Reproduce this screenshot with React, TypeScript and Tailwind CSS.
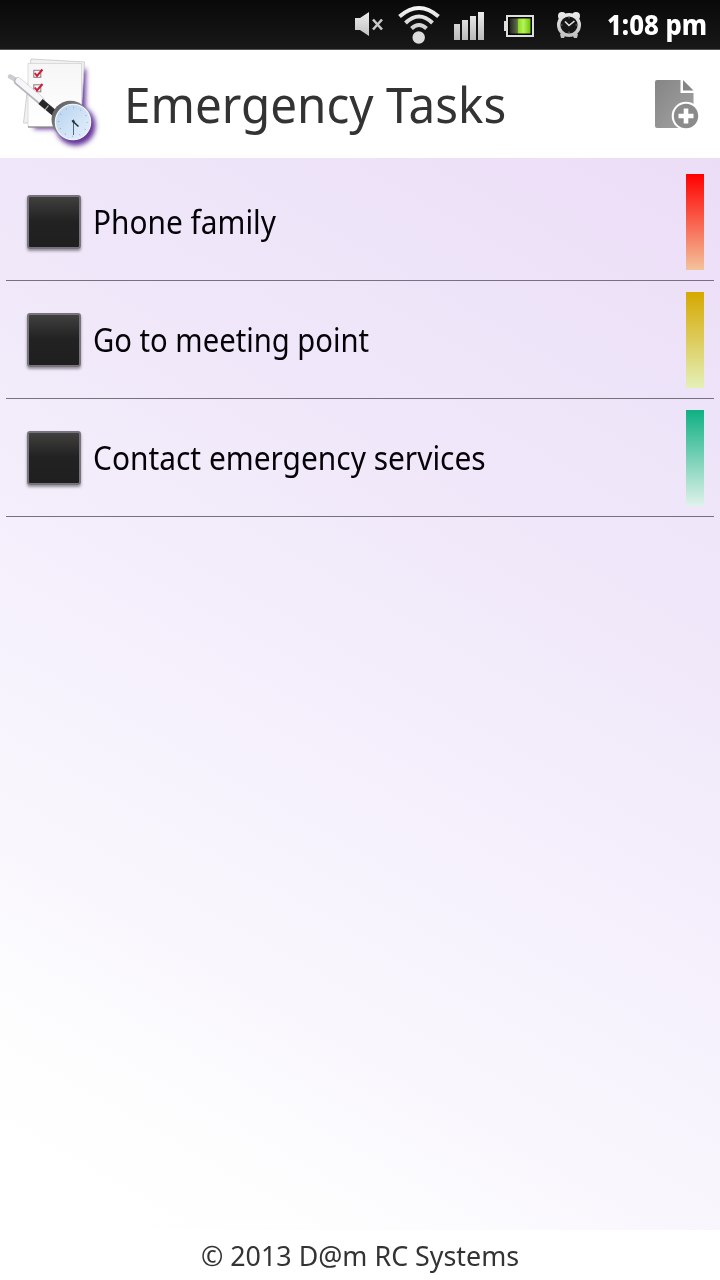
import React from "react";

const FONT = "font-['Noto_Sans','Noto_Sans_CJK_SC',sans-serif]";

type Task = { label: string; bar: string; text: string };

const tasks: Task[] = [
  { label: "Phone family", bar: "from-[#ff0000] to-[#f3c39c]", text: "scale-x-[0.932]" },
  { label: "Go to meeting point", bar: "from-[#d6a800] to-[#e4f0b8]", text: "scale-x-[0.913]" },
  { label: "Contact emergency services", bar: "from-[#0fb083] to-[#e0f2ea]", text: "scale-x-[0.934]" },
];

function StatusIcons() {
  return (
    <svg width="260" height="48" viewBox="340 0 260 48" className="block shrink-0" aria-hidden="true">
      <defs>
        <linearGradient id="silver" x1="0" y1="8" x2="0" y2="43" gradientUnits="userSpaceOnUse">
          <stop offset="0" stopColor="#f4f4f4" />
          <stop offset="1" stopColor="#b4b4b4" />
        </linearGradient>
        <linearGradient id="charge" x1="508" y1="0" x2="530" y2="0" gradientUnits="userSpaceOnUse">
          <stop offset="0" stopColor="#151515" />
          <stop offset=".43" stopColor="#62704c" />
          <stop offset=".45" stopColor="#8bdc18" />
          <stop offset=".7" stopColor="#b6f45a" />
          <stop offset="1" stopColor="#72c60c" />
        </linearGradient>
      </defs>
      <path d="M355 18h5l9-6v24l-9-6h-5z" fill="url(#silver)" />
      <path d="M373 19.500l9 10M382 19.500l-9 10" stroke="#c9c9c9" strokeWidth="2.600" />
      <g fill="none" stroke="url(#silver)" strokeWidth="4">
        <path d="M399.500 16.500Q419 -.5 438.500 16.500" />
        <path d="M405.500 23Q419 10 432.500 23" />
        <path d="M411.500 28.500Q419 21.500 426.500 28.500" />
      </g>
      <circle cx="418.700" cy="37.500" r="6.200" fill="#dcdcdc" />
      <path d="M454 24h6v16h-6zM462 20h6v20h-6zM470 16h6v24h-6zM478 12h6v28h-6z" fill="url(#silver)" />
      <path d="M504 21h3v10h-3z" fill="#dedede" />
      <rect x="507" y="16" width="26" height="20" fill="#050505" stroke="#dedede" strokeWidth="2" />
      <rect x="509.500" y="18.500" width="21" height="15" fill="url(#charge)" />
      <g fill="url(#silver)">
        <circle cx="562" cy="16" r="4" />
        <circle cx="576" cy="16" r="4" />
        <path d="M560 34l1 4h3l2-4zM578 34l-1 4h-3l-2-4z" />
      </g>
      <circle cx="569" cy="25" r="10.300" fill="#161616" stroke="url(#silver)" strokeWidth="3.400" />
      <path d="M565 21.500l4 4 5.500-4.500" fill="none" stroke="#e2e2e2" strokeWidth="1.600" />
      <path d="M569 17v1.500M569 31.500v1.500M561 25h1.500M575.500 25h1.500" stroke="#777" strokeWidth="1" />
    </svg>
  );
}

function AppLogo() {
  return (
    <svg width="110" height="108" viewBox="0 0 110 108" className="block shrink-0" aria-hidden="true">
      <defs>
        <filter id="glow" x="-30%" y="-30%" width="160%" height="160%">
          <feGaussianBlur stdDeviation="2.600" />
        </filter>
        <linearGradient id="paper" x1="0" y1="0" x2="0" y2="1">
          <stop offset="0" stopColor="#f6f6f7" />
          <stop offset="1" stopColor="#fff" />
        </linearGradient>
        <linearGradient id="face" x1="0" y1="0" x2="1" y2="1">
          <stop offset="0" stopColor="#b7d2ef" />
          <stop offset="1" stopColor="#e6f1fc" />
        </linearGradient>
        <linearGradient id="rim" x1="0" y1="0" x2="1" y2="1">
          <stop offset="0" stopColor="#555" />
          <stop offset=".55" stopColor="#8c8c90" />
          <stop offset="1" stopColor="#f3f3f5" />
        </linearGradient>
      </defs>
      <g fill="#65369a" filter="url(#glow)">
        <path d="M36 18l50 1-1 60H34z" />
        <circle cx="75.500" cy="75.500" r="20" />
      </g>
      <path d="M31 9l53.500 3-4 61H23.500z" fill="#f1f1f2" stroke="#c6c6ca" strokeWidth=".8" />
      <path d="M28 13.500h53.500V77H28z" fill="url(#paper)" stroke="#d0d0d4" strokeWidth=".7" />
      <path d="M28 77h34" stroke="#777" strokeWidth="1" />
      {[19.5, 34].map((y) => (
        <g key={y} fill="none" transform={`translate(33 ${y})`}>
          <rect x=".8" y=".8" width="7" height="7" stroke="#8d7480" strokeWidth="1" />
          <path d="M1.800 3.500l2.200 3L9.500 0" stroke="#cf1e34" strokeWidth="2" />
        </g>
      ))}
      <path d="M10 26.500l7 4" stroke="#cdcdd1" strokeWidth="4.500" strokeLinecap="round" />
      <path d="M18 31.500l22.500 19" stroke="#b4b4b9" strokeWidth="8" strokeLinecap="round" />
      <path d="M18.500 31l22 18.500" stroke="#f6f6f8" strokeWidth="6" strokeLinecap="round" />
      <path d="M40.500 51.500l15 12.500" stroke="#28282a" strokeWidth="6.500" />
      <path d="M48.500 55.500l-3.500 4.500" stroke="#bbb" strokeWidth="1.200" />
      <ellipse cx="70.500" cy="69.500" rx="19" ry="18.800" fill="url(#rim)" />
      <circle cx="73" cy="72" r="17.600" fill="url(#face)" stroke="#edf4fb" strokeWidth="1.300" />
      <circle cx="73" cy="72" r="14.300" fill="none" stroke="#8da3bb" strokeWidth="1.600" strokeDasharray=".6 6.890" />
      <path d="M73.500 69.500V85" stroke="#526b85" strokeWidth="1" />
      <path d="M72 70.500l6.500 6" stroke="#252c38" strokeWidth="1.600" />
      <circle cx="73.500" cy="71.500" r="1.200" fill="#29313c" />
    </svg>
  );
}

function AddIcon() {
  return (
    <svg width="46" height="52" viewBox="0 0 46 52" className="block" aria-hidden="true">
      <defs>
        <linearGradient id="sheet" x1="0" y1="0" x2="1" y2="1">
          <stop offset="0" stopColor="#858585" />
          <stop offset="1" stopColor="#a3a3a3" />
        </linearGradient>
      </defs>
      <path d="M2 0H25.500V13H38.500V48H2Q0 48 0 46V2Q0 0 2 0z" fill="url(#sheet)" />
      <path d="M28 0L38.500 10.500H28z" fill="#858585" />
      <circle cx="31" cy="36" r="14.300" fill="#fff" />
      <circle cx="31" cy="36" r="12.200" fill="#8b8b8b" />
      <path d="M31 28.500v15M23.500 36h15" stroke="#fff" strokeWidth="4.600" />
    </svg>
  );
}

function TaskRow({ task }: { task: Task }) {
  return (
    <li className="flex h-[118px] items-start justify-between border-b border-[#77707e] pr-[10px] pl-[21px]">
      <div className="flex h-full items-center">
        <button
          role="checkbox"
          aria-checked="false"
          aria-label={task.label}
          className="mt-px h-[54px] w-[54px] rounded-[3px] border-2 border-[#77727b] bg-linear-to-b from-[#40403f] via-[#222] via-48% to-[#1f1f1f] shadow-[0_2px_3px_rgba(0,0,0,0.4)]"
        />
        <span className={`ml-[12px] origin-left text-[32px] leading-[48px] whitespace-nowrap text-[#050308] ${task.text}`}>{task.label}</span>
      </div>
      <span className={`mt-[11px] h-24 w-[18px] bg-linear-to-b/srgb ${task.bar}`} />
    </li>
  );
}

export default function App() {
  return (
    <div className={`flex h-[1280px] w-[720px] flex-col overflow-hidden bg-white ${FONT}`}>
      <div className="flex h-[50px] shrink-0 items-start justify-end border-b border-[#555] bg-linear-to-b from-[#090909] to-[#181818] pr-3 text-white">
        <StatusIcons />
        <div className="ml-[7px] w-[101px] origin-left scale-x-[0.885] text-[29px] leading-[48px] font-extrabold whitespace-nowrap">1:08 pm</div>
      </div>
      <header className="flex h-[108px] shrink-0 items-center bg-white">
        <AppLogo />
        <h1 className="mt-px ml-[14px] flex-1 origin-left scale-x-[0.971] text-[49px] leading-[73px] whitespace-nowrap text-[#333]">Emergency Tasks</h1>
        <button className="mt-[4px] mr-[19px]" aria-label="Add task">
          <AddIcon />
        </button>
      </header>
      <main className="flex-1 bg-[linear-gradient(210deg,#ecddf7_0%,#eee5f9_22%,#f2ebfa_42%,#f6f2fd_60%,#f9f7fd_74%,#fdfdfe_86%,#ffffff_96%)] px-[6px] pt-[5px]">
        <ul>
          {tasks.map((task) => (
            <TaskRow key={task.label} task={task} />
          ))}
        </ul>
      </main>
      <footer className="flex h-[50px] shrink-0 items-center justify-center bg-white pt-[2px] text-[27px] leading-[40px] text-[#333]">
        <span className="scale-x-[0.994]">© 2013 D@m RC Systems</span>
      </footer>
    </div>
  );
}
